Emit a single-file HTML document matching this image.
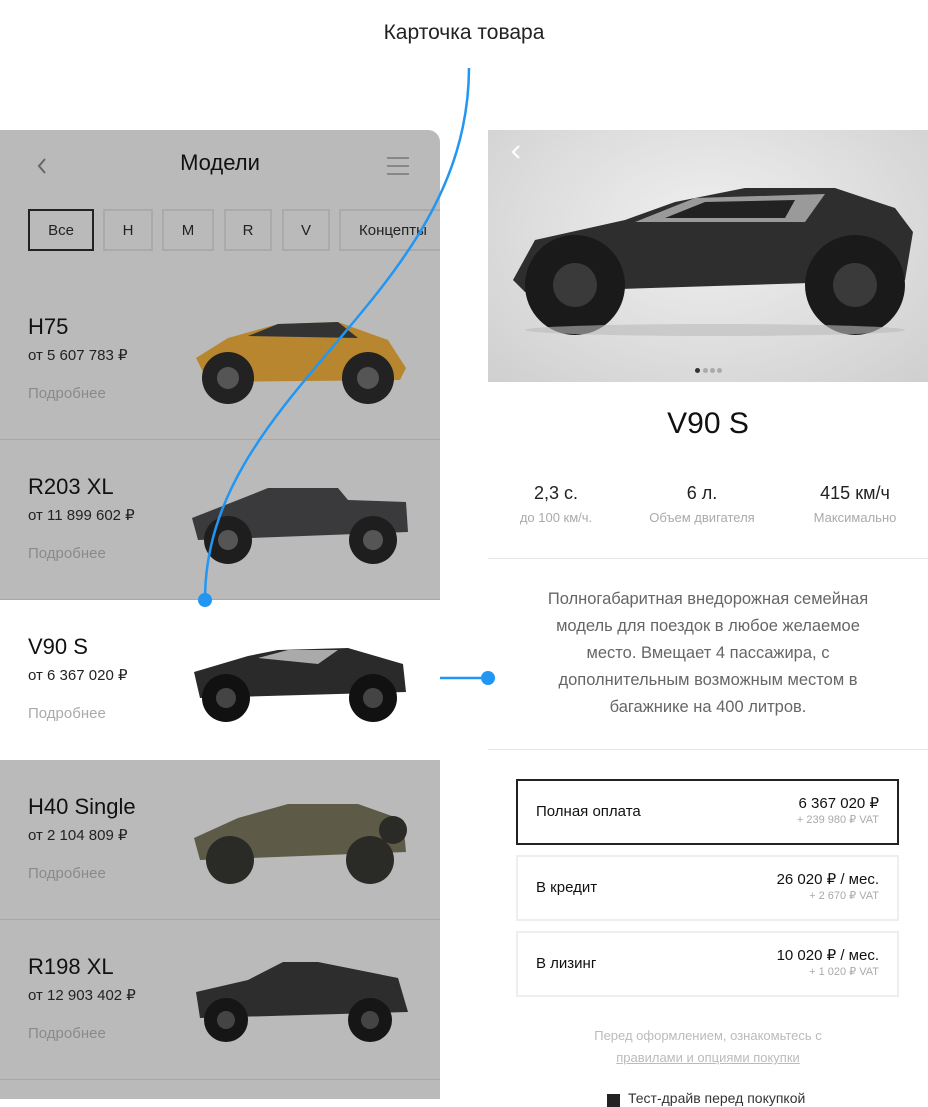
<html><head><style>
body{margin:0;width:928px;height:1099px;background:#fff;position:relative;overflow:hidden;font-family:"Liberation Sans",sans-serif;color:#111}
.a{position:absolute}
.left{left:0;top:130px;width:440px;height:969px;background:#bababa;border-top-right-radius:12px;overflow:hidden}
.chip{position:absolute;top:79px;height:42px;border:2px solid #aaa;box-sizing:border-box;font-size:15px;display:flex;align-items:center;justify-content:center;color:#222;white-space:nowrap}
.row{position:absolute;left:0;width:440px;height:160px;border-bottom:1px solid #a8a8a8;box-sizing:border-box}
.row .n{position:absolute;left:28px;top:34px;font-size:22px;color:#111}
.row .p{position:absolute;left:28px;top:66px;font-size:15px;color:#222}
.row .m{position:absolute;left:28px;top:105px;font-size:15px;color:#8a8a8a}
.row svg{position:absolute;left:188px;top:30px}
.st{position:absolute;top:483px;width:140px;text-align:center}
.st b{display:block;font-weight:normal;font-size:18px;color:#222}
.st i{display:block;font-style:normal;font-size:13px;color:#aaa;margin-top:6px}
.box{position:absolute;left:516px;width:383px;height:66px;border:2px solid #eee;box-sizing:border-box}
.box .l{position:absolute;left:18px;top:22px;font-size:15px}
.box .r{position:absolute;right:18px;top:13px;font-size:15px;text-align:right}
.box .r small{display:block;font-size:11px;color:#aaa;margin-top:1px}
</style></head><body>
<div class="a" style="left:0;top:21px;width:928px;text-align:center;font-size:21px;color:#222">Карточка товара</div>
<div class="a left">
 <svg class="a" style="left:36px;top:27px" width="12" height="18"><path d="M9 2 L3 9 L9 16" stroke="#666" stroke-width="2" fill="none"/></svg>
 <div class="a" style="left:0;width:440px;top:20px;text-align:center;font-size:22px">Модели</div>
 <svg class="a" style="left:387px;top:26px" width="22" height="20"><path d="M0 2H22M0 10H22M0 18H22" stroke="#888" stroke-width="2"/></svg>
 <div class="chip" style="left:28px;width:66px;border-color:#222">Все</div>
 <div class="chip" style="left:103px;width:50px">H</div>
 <div class="chip" style="left:162px;width:52px">M</div>
 <div class="chip" style="left:224px;width:48px">R</div>
 <div class="chip" style="left:282px;width:48px">V</div>
 <div class="chip" style="left:339px;width:110px;justify-content:flex-start;padding-left:18px">Концепты</div>
</div>
<div class="row" style="top:280px"><div class="n">H75</div><div class="p">от 5 607 783 ₽</div><div class="m">Подробнее</div>
<svg width="225" height="100"><path d="M8 48 L40 28 L90 14 L150 12 L200 30 L218 58 L212 70 L20 72Z" fill="#b8862e"/><path d="M60 26 L90 14 L150 12 L170 28Z" fill="#333"/><circle cx="40" cy="68" r="26" fill="#222"/><circle cx="180" cy="68" r="26" fill="#222"/><circle cx="40" cy="68" r="11" fill="#555"/><circle cx="180" cy="68" r="11" fill="#555"/></svg></div>
<div class="row" style="top:440px"><div class="n">R203 XL</div><div class="p">от 11 899 602 ₽</div><div class="m">Подробнее</div>
<svg width="225" height="100"><path d="M4 48 L50 30 L80 18 L150 18 L160 30 L218 32 L220 62 L10 70Z" fill="#3a3a3c"/><circle cx="40" cy="70" r="24" fill="#1e1e1e"/><circle cx="185" cy="70" r="24" fill="#1e1e1e"/><circle cx="40" cy="70" r="10" fill="#555"/><circle cx="185" cy="70" r="10" fill="#555"/></svg></div>
<div class="row" style="top:600px;background:#fff;border-bottom:none"><div class="n">V90 S</div><div class="p">от 6 367 020 ₽</div><div class="m" style="color:#aaa">Подробнее</div>
<svg width="225" height="100"><path d="M6 42 L60 26 L90 20 L160 18 L215 34 L218 62 L12 68Z" fill="#2a2a2a"/><path d="M70 28 L100 20 L150 20 L130 34Z" fill="#aaa"/><circle cx="38" cy="68" r="24" fill="#111"/><circle cx="185" cy="68" r="24" fill="#111"/><circle cx="38" cy="68" r="10" fill="#444"/><circle cx="185" cy="68" r="10" fill="#444"/></svg></div>
<div class="row" style="top:760px"><div class="n">H40 Single</div><div class="p">от 2 104 809 ₽</div><div class="m">Подробнее</div>
<svg width="225" height="100"><path d="M6 48 L50 28 L100 14 L170 14 L215 30 L218 62 L12 70Z" fill="#5e5a48"/><circle cx="42" cy="70" r="24" fill="#2a2a26"/><circle cx="182" cy="70" r="24" fill="#2a2a26"/><circle cx="205" cy="40" r="14" fill="#2a2a26"/></svg></div>
<div class="row" style="top:920px"><div class="n">R198 XL</div><div class="p">от 12 903 402 ₽</div><div class="m">Подробнее</div>
<svg width="225" height="100"><path d="M8 42 L60 30 L95 12 L130 12 L210 28 L220 62 L12 68Z" fill="#2d2d2d"/><circle cx="38" cy="70" r="22" fill="#161616"/><circle cx="182" cy="70" r="22" fill="#161616"/><circle cx="38" cy="70" r="9" fill="#444"/><circle cx="182" cy="70" r="9" fill="#444"/></svg></div>

<div class="a" style="left:488px;top:130px;width:440px;height:252px;background:radial-gradient(ellipse at 50% 40%,#f0f0f0,#cfcfcf)"></div>
<svg class="a" style="left:510px;top:144px" width="12" height="16"><path d="M9 2 L3 8 L9 14" stroke="#fff" stroke-width="2" fill="none"/></svg>
<svg class="a" style="left:505px;top:180px" width="415" height="160"><path d="M8 100 L30 60 L120 40 L170 22 L240 8 L330 8 L390 28 L408 52 L400 100 L20 112Z" fill="#2e2e2e"/><path d="M130 42 L190 18 L320 14 L300 42Z" fill="#9a9a9a"/><path d="M160 38 L200 22 L290 20 L280 38Z" fill="#222"/><circle cx="70" cy="105" r="50" fill="#1a1a1a"/><circle cx="350" cy="105" r="50" fill="#1a1a1a"/><circle cx="70" cy="105" r="22" fill="#3a3a3a"/><circle cx="350" cy="105" r="22" fill="#3a3a3a"/><ellipse cx="210" cy="150" rx="190" ry="6" fill="#bbb" opacity=".6"/></svg>
<div class="a" style="left:695px;top:368px;width:5px;height:5px;border-radius:50%;background:#333"></div>
<div class="a" style="left:703px;top:368px;width:5px;height:5px;border-radius:50%;background:#aaa"></div>
<div class="a" style="left:710px;top:368px;width:5px;height:5px;border-radius:50%;background:#aaa"></div>
<div class="a" style="left:717px;top:368px;width:5px;height:5px;border-radius:50%;background:#aaa"></div>
<div class="a" style="left:488px;top:407px;width:440px;text-align:center;font-size:30px">V90 S</div>
<div class="st" style="left:486px"><b>2,3 с.</b><i>до 100 км/ч.</i></div>
<div class="st" style="left:632px"><b>6 л.</b><i>Объем двигателя</i></div>
<div class="st" style="left:785px"><b>415 км/ч</b><i>Максимально</i></div>
<div class="a" style="left:488px;top:558px;width:440px;height:1px;background:#e6e6e6"></div>
<div class="a" style="left:488px;top:586px;width:440px;text-align:center;font-size:16.5px;line-height:27px;color:#666;white-space:nowrap">Полногабаритная внедорожная семейная<br>модель для поездок в любое желаемое<br>место. Вмещает 4 пассажира, с<br>дополнительным возможным местом в<br>багажнике на 400 литров.</div>
<div class="a" style="left:488px;top:749px;width:440px;height:1px;background:#e6e6e6"></div>
<div class="box" style="top:779px;border-color:#222"><div class="l">Полная оплата</div><div class="r">6 367 020 ₽<small>+ 239 980 ₽ VAT</small></div></div>
<div class="box" style="top:855px"><div class="l">В кредит</div><div class="r">26 020 ₽ / мес.<small>+ 2 670 ₽ VAT</small></div></div>
<div class="box" style="top:931px"><div class="l">В лизинг</div><div class="r">10 020 ₽ / мес.<small>+ 1 020 ₽ VAT</small></div></div>
<div class="a" style="left:488px;top:1025px;width:440px;text-align:center;font-size:13px;line-height:22px;color:#bbb">Перед оформлением, ознакомьтесь с<br><u>правилами и опциями покупки</u></div>
<div class="a" style="left:607px;top:1094px;width:13px;height:13px;background:#222"></div>
<div class="a" style="left:628px;top:1090px;font-size:14px;color:#333">Тест-драйв перед покупкой</div>

<svg class="a" style="left:0;top:0" width="928" height="1099"><path d="M469 68 C 468 300, 205 390, 205 600" stroke="#2196f3" stroke-width="2.5" fill="none"/><circle cx="205" cy="600" r="7" fill="#2196f3"/><path d="M440 678 H488" stroke="#2196f3" stroke-width="2.5"/><circle cx="488" cy="678" r="7" fill="#2196f3"/></svg>
</body></html>
